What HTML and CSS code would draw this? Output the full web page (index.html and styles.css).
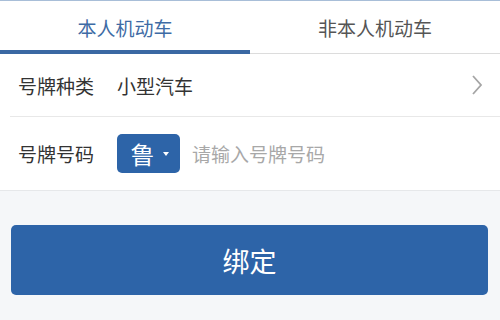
FILE: index.html
```html
<!DOCTYPE html>
<html lang="zh">
<head>
<meta charset="utf-8">
<link rel="stylesheet" href="styles.css">
</head>
<body>
<div class="page">
  <div class="tabs">
    <div class="tab active">本人机动车</div>
    <div class="tab">非本人机动车</div>
  </div>
  <div class="form">
    <div class="row row-type">
      <span class="label">号牌种类</span>
      <span class="value">小型汽车</span>
      <svg class="chev" width="12" height="22" viewBox="0 0 12 22"><path d="M2 2 L10 11 L2 20" fill="none" stroke="#a5a5a5" stroke-width="1.8"/></svg>
    </div>
    <div class="row row-num">
      <span class="label">号牌号码</span>
      <span class="prov">鲁<span class="caret"></span></span>
      <span class="placeholder">请输入号牌号码</span>
    </div>
  </div>
  <div class="actions">
    <div class="btn">绑定</div>
  </div>
</div>
</body>
</html>
```

FILE: styles.css
```css
html, body {
  margin: 0;
  padding: 0;
}
body {
  width: 500px;
  height: 320px;
  background: #f5f7f9;
  font-family: "Noto Sans CJK SC", "Noto Sans", sans-serif;
  overflow: hidden;
}
.page {
  border-top: 1px solid #a8bed8;
}
.tabs {
  display: flex;
  background: #fff;
  height: 53px;
}
.tab {
  flex: 1;
  display: flex;
  align-items: center;
  justify-content: center;
  font-size: 19px;
  color: #555;
  border-bottom: 1px solid #dcdcdc;
  box-sizing: border-box;
}
.tab.active {
  color: #3e6ba5;
  border-bottom: 4px solid #3a68a3;
  padding-top: 3px;
}
.form {
  background: #fff;
  border-bottom: 1px solid #e6e8ea;
}
.row {
  display: flex;
  align-items: center;
  padding-left: 18px;
  box-sizing: border-box;
}
.row-type {
  height: 63px;
  margin-left: 10px;
  padding-left: 8px;
  border-bottom: 1px solid #e8e8e8;
  padding-right: 17px;
}
.row-num {
  height: 73px;
}
.label {
  font-size: 19px;
  color: #333;
  width: 99px;
}
.value {
  font-size: 19px;
  color: #333;
  flex: 1;
}
.chev {
  display: block;
}
.prov {
  width: 63px;
  height: 39px;
  background: #2d64a8;
  border-radius: 5px;
  color: #fff;
  font-size: 24px;
  display: flex;
  align-items: center;
  justify-content: center;
  gap: 8px;
  padding-left: 2px;
  box-sizing: border-box;
}
.caret {
  width: 0;
  height: 0;
  border-left: 3.5px solid transparent;
  border-right: 3.5px solid transparent;
  border-top: 4px solid #fff;
}
.placeholder {
  margin-left: 12px;
  font-size: 19px;
  color: #a8a8a8;
}
.actions {
  padding: 34px 12px 0 11px;
}
.btn {
  height: 70px;
  background: #2d64a8;
  border-radius: 5px;
  color: #fff;
  font-size: 27px;
  display: flex;
  align-items: center;
  justify-content: center;
}
```
